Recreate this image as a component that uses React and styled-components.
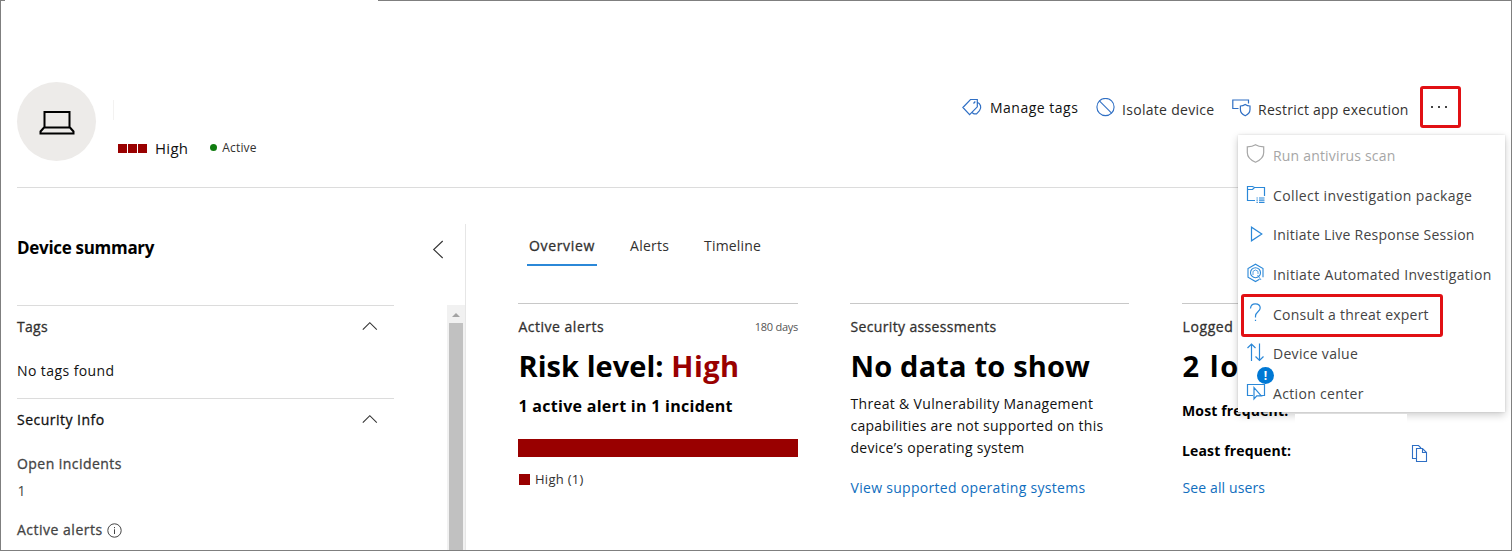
import React from "react";
import styled, { createGlobalStyle } from "styled-components";

const Global = createGlobalStyle`
  *{box-sizing:border-box}
  body{margin:0;background:#fff;font-family:"Open Sans","Noto Sans",sans-serif;color:#201f1e}
`;

const Page = styled.div`
  position:relative;width:1512px;height:551px;overflow:hidden;
  border:1px solid #7f7f7f;border-top:0;background:#fff;display:flex;flex-direction:column;
`;
const TopEdge = styled.div`
  flex:none;height:1px;display:flex;justify-content:space-between;
  &::before{content:"";width:4px;background:#7f7f7f}
  &::after{content:"";width:1133px;background:#7f7f7f}
`;
const Text = styled.span`
  display:block;white-space:nowrap;
  font-size:${(p) => p.$size || 14}px;
  line-height:${(p) => p.$lh || 20}px;
  font-weight:${(p) => (p.$weight === 700 ? 700 : 400)};
  -webkit-text-stroke:${(p) => (p.$weight === 500 ? "0.3px currentColor" : "0")};
  letter-spacing:${(p) => (p.$ls === undefined ? 0.28 : p.$ls)}px;
  color:${(p) => p.$color || "#323130"};
`;
const Risk = styled.span`color:#990000;letter-spacing:.5px;`;

const Header = styled.header`
  flex:none;height:187px;margin:0 6px 0 16px;padding-top:81px;
  border-bottom:1px solid #dcdcdc;display:flex;align-items:flex-start;
`;
const Avatar = styled.div`
  width:79px;height:79px;border-radius:50%;background:#edebe9;
  display:flex;align-items:center;justify-content:center;padding-top:2px;padding-left:1px;
`;
const Identity = styled.div`margin-left:17px;padding-top:18px;`;
const NameSlot = styled.div`height:20px;border-left:1px solid #f3f2f1;`;
const Meta = styled.div`
  display:flex;align-items:center;margin-top:18px;height:20px;padding-left:5px;
`;
const Squares = styled.div`display:flex;gap:1px;margin-right:8px;`;
const Square = styled.i`
  display:block;width:${(p) => p.$s || 9}px;height:${(p) => p.$s || 9}px;background:#990000;
`;
const Dot = styled.i`
  width:7px;height:7px;border-radius:50%;background:#107c10;margin:0 5px 2px 22px;
`;
const Toolbar = styled.div`margin-left:auto;margin-right:44px;display:flex;align-items:flex-start;padding-top:4px;`;
const Command = styled.div`
  display:flex;align-items:flex-start;width:${(p) => p.$w}px;
  svg{flex:none;margin-top:${(p) => p.$iconTop}px}
  span{margin-left:${(p) => p.$gap}px;margin-top:${(p) => p.$textTop}px}
`;
const More = styled.div`
  width:41px;height:42px;border:3px solid #e11014;border-radius:3px;
  display:flex;align-items:center;justify-content:center;gap:5px;padding-right:3px;
  i{width:2px;height:2px;background:#444}
`;

const Body = styled.div`flex:1;display:flex;min-height:0;padding-top:36px;`;
const Sidebar = styled.aside`
  width:465px;border-right:1px solid #e6e6e6;display:flex;flex-direction:column;
`;
const SideHead = styled.div`
  height:81px;flex:none;padding:12px 21px 0 16px;display:flex;justify-content:space-between;
  svg{margin-top:4px}
`;
const SideScroll = styled.div`flex:1;display:flex;justify-content:space-between;min-height:0;`;
const Sections = styled.div`width:377px;margin-left:16px;`;
const Section = styled.section`
  border-top:1px solid #dcdcdc;height:${(p) => p.$h}px;padding-top:11px;
`;
const SectionHead = styled.div`
  display:flex;justify-content:space-between;align-items:center;padding-right:16px;
  margin-bottom:${(p) => p.$mb}px;
  svg{margin-top:-2px}
`;
const Inline = styled.div`display:flex;align-items:center;gap:4px;margin-top:19px;`;
const Track = styled.div`width:18px;background:#f1f1f1;padding:8px 2px 0;`;
const Thumb = styled.div`width:14px;height:300px;margin-top:6px;background:#c1c1c1;`;
const Arrow = styled.svg`display:block;margin:0 auto;`;

const Main = styled.main`flex:1;padding-left:52px;`;
const Tabs = styled.nav`display:flex;margin-left:9px;padding-top:11px;height:43px;`;
const Tab = styled.div`
  height:31px;padding:1px 2px 0;width:${(p) => p.$w}px;margin-right:${(p) => p.$mr}px;
  border-bottom:2px solid ${(p) => (p.$on ? "#2b88d8" : "transparent")};
`;
const Cards = styled.div`display:grid;grid-template-columns:280px 279px 279px;column-gap:52px;margin-top:36px;`;
const Card = styled.article`
  border-top:1px solid #c8c8c8;padding-top:13px;
  margin-left:${(p) => p.$shift || 0}px;
`;
const CardHead = styled.div`display:flex;justify-content:space-between;padding-left:.5px;`;
const Stack = styled.div`padding-left:.5px;margin-top:${(p) => p.$mt || 0}px;`;
const Bar = styled.div`height:18px;background:#990000;margin-top:23px;`;
const Legend = styled.div`display:flex;align-items:center;gap:5px;padding-left:1px;margin-top:12px;`;
const FreqRow = styled.div`
  display:flex;justify-content:space-between;padding-right:32px;margin-top:${(p) => p.$mt}px;height:20px;
  svg{margin-top:2px}
`;

const Menu = styled.div`
  position:absolute;left:1237px;top:135px;width:267px;height:277px;background:#fff;
  box-shadow:0 3px 8px rgba(0,0,0,.2),0 0 2px rgba(0,0,0,.12);
`;
const Item = styled.div`
  height:39.7px;display:flex;align-items:center;padding-left:8px;position:relative;
  svg{flex:none;margin-right:8px;margin-top:-1px;overflow:visible}
  span{margin-top:2px}
`;
const Highlight = styled.div`
  position:absolute;left:3px;top:0;width:202px;height:43px;
  border:3px solid #e11014;border-radius:3px;
`;
const Badge = styled.div`
  position:absolute;left:19px;top:-6.5px;width:17px;height:17px;border-radius:50%;
  background:#0078d4;color:#fff;font-size:12px;font-weight:700;line-height:17px;text-align:center;
`;
const Redaction = styled.div`
  position:absolute;left:1294px;top:414px;width:112px;height:16px;background:#fff;
`;

const Icon = ({ w = 20, h = 20, color = "#2b88d8", sw = 1.1, children }) => (
  <svg width={w} height={h} viewBox={`0 0 ${w} ${h}`} fill="none" stroke={color} strokeWidth={sw}>
    {children}
  </svg>
);

const LaptopIcon = () => (
  <Icon w={36} h={26} color="#000" sw={2}>
    <path d="M5.5 2h25v15.5h-25zM5.500 17L1.500 21.500V23.500H34.500V21.500L30.500 17" />
  </Icon>
);
const TagsIcon = () => (
  <Icon w={20} h={18} color="#2f6fc4" sw={1.2}>
    <path d="M.9 9.500L8.500 1.500H15.300V8.800L7.600 16.600ZM15.300 4.200C18.500 5.500 20 9.500 17.500 12.700L14.500 15.800H12L9.800 14.400M13.300 3.500L11.500 5.500" />
  </Icon>
);
const BlockIcon = () => (
  <Icon color="#2f6fc4">
    <circle cx="9.500" cy="9" r="8.600" />
    <path d="M3.400 2.900l12.200 12.200" />
  </Icon>
);
const RestrictIcon = () => (
  <Icon w={19} h={18} color="#2f6fc4" sw={1.2}>
    <path d="M6.500 9.500H.8V1H16.500V4.500M13.200 5.500c1.500 1 3 1.500 4.800 1.500v3.500c0 3-2 5-4.800 6.300-2.800-1.300-4.800-3.300-4.800-6.300V7c1.800 0 3.300-.5 4.800-1.500z" />
  </Icon>
);
const ShieldIcon = () => (
  <Icon w={19} color="#a6a6a6" sw={1.2}>
    <path d="M9.500 .8C12 2.500 14.500 2.800 17.700 2.800V8.500c0 4.500-3.500 7.700-8.200 9.700C4.800 16.200 1.300 13 1.300 8.500V2.800C4.500 2.800 7 2.500 9.500 .8z" />
  </Icon>
);
const FolderIcon = () => (
  <Icon w={19} sw={1.2}>
    <path d="M9 16.500H1.500V2.500H6.500L8.500 3.500H18.500V12M1.500 5.500H6.500L8.500 3.500M10.500 14h1.300M13 14h5.500M10.500 16.200h1.300M13 16.200h5.500M10.500 18.400h1.300M13 18.400h5.500" />
  </Icon>
);
const PlayIcon = () => (
  <Icon w={19} sw={1.2}>
    <path d="M5.500 3.200V16.800L15.800 10z" />
  </Icon>
);
const HexIcon = () => (
  <Icon w={19}>
    <path d="M13.500 16.200L9.500 18.500L2 14.200v-8.700L9.500 1.200L17 5.500v8.700" />
    <circle cx="9.500" cy="9.700" r="5" />
    <path d="M11.500 12l3.500 5M7 12V8.300L9.500 7l2.500 1.300V11" strokeWidth=".8" />
  </Icon>
);
const QuestionIcon = () => (
  <Icon w={19} sw={1.2}>
    <path d="M4.500 5.500C4.700 2.500 6.500 .8 9.300 .8c3 0 4.900 1.600 4.900 4.200 0 3.600-4.700 4-4.700 8V14.500M9.500 16.700v1.400" />
  </Icon>
);
const SortIcon = () => (
  <Icon w={19} sw={1.2}>
    <path d="M5.500 18V1M1.500 5l4-4 4 4M13.500 .5v16.800M9.500 13.500l4 4 4-4" />
  </Icon>
);
const ActionIcon = () => (
  <Icon w={19} sw={1.2}>
    <path d="M7 13.500H1.500V2.500H18.500V13.500H15.500M8 5.500V17L10.800 13.800H15.300z" />
  </Icon>
);
const CopyIcon = () => (
  <Icon w={17} h={19} color="#2f6fc4" sw={1.1}>
    <path d="M5 15.500H1.500V2.500H7.500L10 5M5.500 5.500H11.500L15.500 9.500V18.500H5.500zM11.500 5.500V9.500H15.500" />
  </Icon>
);
const ChevronUp = () => (
  <Icon w={16} h={10} color="#333"><path d="M.8 8.700L7.800 1.700L14.800 8.700" /></Icon>
);
const ChevronLeft = () => (
  <Icon w={12} h={19} color="#333"><path d="M10.700 1L1.700 9.500L10.700 18" /></Icon>
);
const InfoIcon = () => (
  <Icon w={15} h={15} color="#444" sw={1}>
    <circle cx="7.500" cy="7.500" r="6.700" /><path d="M7.500 6.300v4.700M7.500 4v1.200" />
  </Icon>
);

const menuItems = [
  ["Run antivirus scan", ShieldIcon, 0.18],
  ["Collect investigation package", FolderIcon, 0.39],
  ["Initiate Live Response Session", PlayIcon, 0.24],
  ["Initiate Automated Investigation", HexIcon, 0.3],
  ["Consult a threat expert", QuestionIcon, 0.23],
  ["Device value", SortIcon, 0.3],
  ["Action center", ActionIcon, 0.33],
];

export default function App() {
  return (
    <>
      <Global />
      <Page>
        <TopEdge />
        <Header>
          <Avatar><LaptopIcon /></Avatar>
          <Identity>
            <NameSlot />
            <Meta>
              <Squares><Square /><Square /><Square /></Squares>
              <Text $size={15} $color="#111">High</Text>
              <Dot />
              <Text $size={12} $lh={24} $ls={0.15}>Active</Text>
            </Meta>
          </Identity>
          <Toolbar>
            <Command $w={134} $iconTop={12} $gap={8} $textTop={12}>
              <TagsIcon /><Text $ls={0.5} $color="#111">Manage tags</Text>
            </Command>
            <Command $w={136} $iconTop={12} $gap={6} $textTop={14}>
              <BlockIcon /><Text $ls={0.3}>Isolate device</Text>
            </Command>
            <Command $w={188} $iconTop={13} $gap={7} $textTop={14}>
              <RestrictIcon /><Text $ls={0.25}>Restrict app execution</Text>
            </Command>
            <More><i /><i /><i /></More>
          </Toolbar>
        </Header>
        <Body>
          <Sidebar>
            <SideHead>
              <Text $size={17} $ls={-0.3} $weight={700} $lh={24} $color="#000">Device summary</Text>
              <ChevronLeft />
            </SideHead>
            <SideScroll>
              <Sections>
                <Section $h={93}>
                  <SectionHead $mb={24}><Text $weight={500}>Tags</Text><ChevronUp /></SectionHead>
                  <Text $ls={0.42} $color="#111">No tags found</Text>
                </Section>
                <Section $h={153}>
                  <SectionHead $mb={24}><Text $ls={0.48} $weight={500} $color="#111">Security Info</Text><ChevronUp /></SectionHead>
                  <Text $ls={0.45} $weight={500} $color="#444">Open incidents</Text>
                  <Stack $mt={7}><Text $color="#444">1</Text></Stack>
                  <Inline><Text $ls={0.5} $weight={500} $color="#444">Active alerts</Text><InfoIcon /></Inline>
                </Section>
              </Sections>
              <Track>
                <Arrow width="8" height="4" viewBox="0 0 8 4"><path d="M0 4L4 0L8 4z" fill="#a3a3a3" /></Arrow>
                <Thumb />
              </Track>
            </SideScroll>
          </Sidebar>
          <Main>
            <Tabs>
              <Tab $on $w={70} $mr={31}><Text $ls={0.65} $weight={500}>Overview</Text></Tab>
              <Tab $w={43} $mr={31}><Text>Alerts</Text></Tab>
              <Tab $w={62} $mr={0}><Text $ls={0.2}>Timeline</Text></Tab>
            </Tabs>
            <Cards>
              <Card>
                <CardHead>
                  <Text $ls={0.5} $weight={500}>Active alerts</Text>
                  <Text $size={11} $ls={-0.25} $color="#555">180 days</Text>
                </CardHead>
                <Stack $mt={9}>
                  <Text $size={29} $ls={0.04} $lh={40} $weight={700} $color="#000">
                    Risk level: <Risk>High</Risk>
                  </Text>
                </Stack>
                <Stack $mt={10}><Text $size={16} $ls={0.28} $weight={700} $color="#000">1 active alert in 1 incident</Text></Stack>
                <Bar />
                <Legend><Square $s={11} /><Text $size={13}>High (1)</Text></Legend>
              </Card>
              <Card>
                <CardHead><Text $ls={0.35} $weight={500}>Security assessments</Text></CardHead>
                <Stack $mt={9}><Text $size={29} $ls={0.18} $lh={40} $weight={700} $color="#000">No data to show</Text></Stack>
                <Stack $mt={7}>
                  <Text $ls={0.33} $lh={22} $color="#111">Threat &amp; Vulnerability Management</Text>
                  <Text $ls={0.25} $lh={22} $color="#111">capabilities are not supported on this</Text>
                  <Text $lh={22} $color="#111">device’s operating system</Text>
                </Stack>
                <Stack $mt={19}><Text $ls={0.3} $color="#106ebe">View supported operating systems</Text></Stack>
              </Card>
              <Card $shift={1}>
                <CardHead><Text $ls={0.6} $weight={500}>Logged</Text></CardHead>
                <Stack $mt={9}><Text $size={29} $ls={1.6} $lh={40} $weight={700} $color="#000">2 lo</Text></Stack>
                <FreqRow $mt={15}><Text $ls={0.15} $weight={700} $color="#000">Most frequent:</Text></FreqRow>
                <FreqRow $mt={20}><Text $ls={0.15} $weight={700} $color="#000">Least frequent:</Text><CopyIcon /></FreqRow>
                <Stack $mt={17}><Text $ls={0.12} $color="#106ebe">See all users</Text></Stack>
              </Card>
            </Cards>
          </Main>
        </Body>
        <Menu>
          {menuItems.map(([label, Glyph, ls], i) => (
            <Item key={label}>
              {i === 4 && <Highlight />}
              {i === 6 && <Badge>!</Badge>}
              <Glyph />
              <Text $ls={ls} $color={i === 0 ? "#a6a6a6" : "#444"}>{label}</Text>
            </Item>
          ))}
        </Menu>
        <Redaction />
      </Page>
    </>
  );
}
